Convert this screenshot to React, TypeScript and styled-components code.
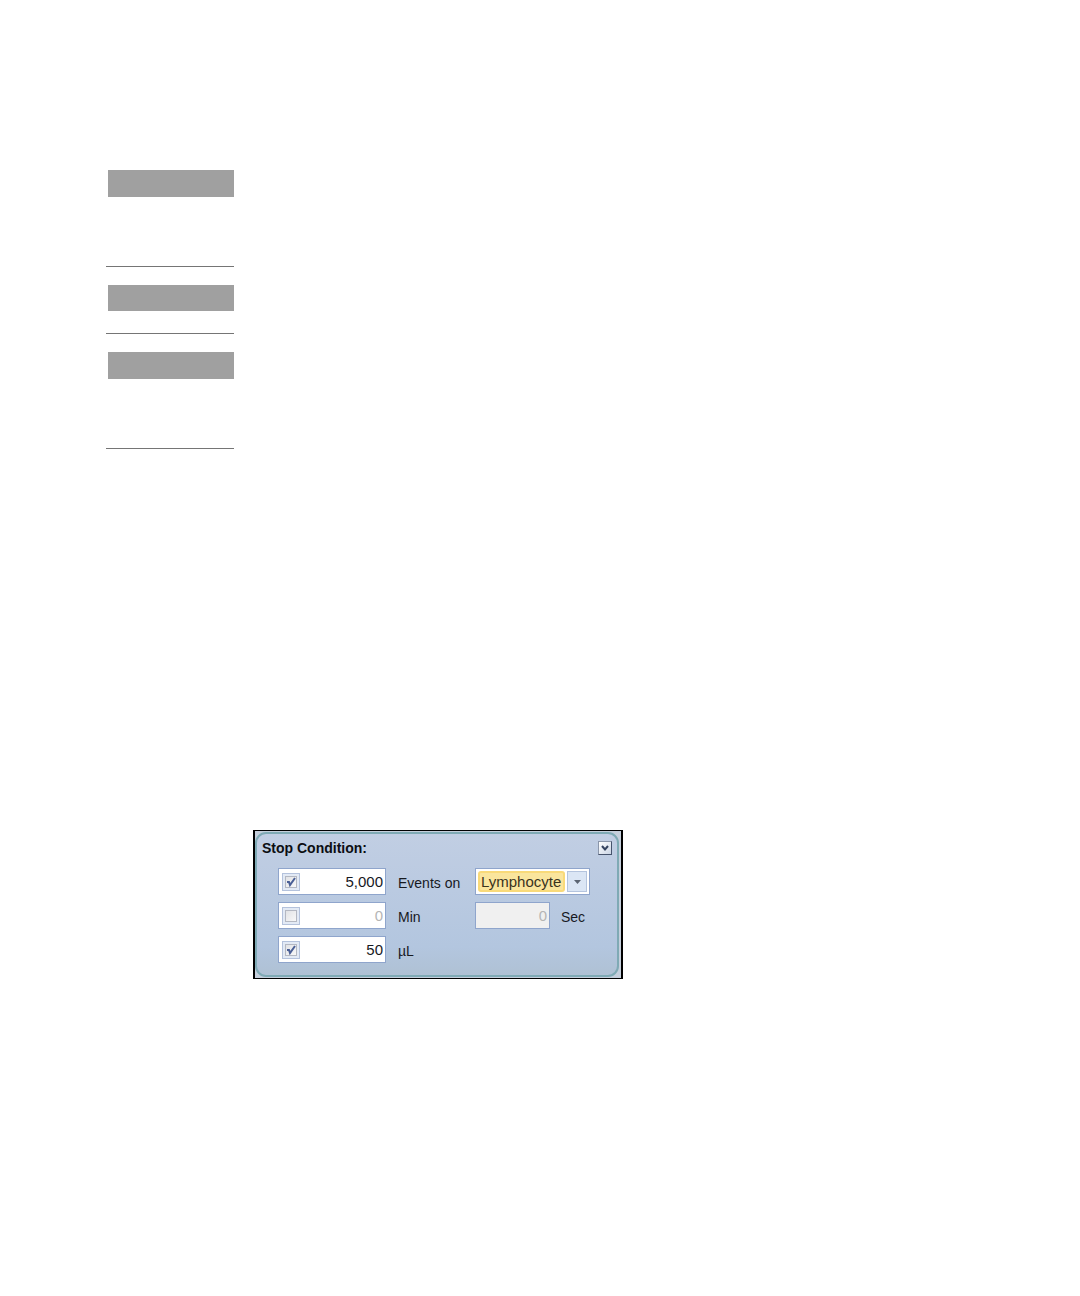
import React, { useState } from "react";
import styled, { createGlobalStyle } from "styled-components";

const GlobalStyle = createGlobalStyle`
  *, *::before, *::after { box-sizing: border-box; }
  body {
    margin: 0;
    background: #fff;
    color: #17191f;
    font-family: "Liberation Sans", Arial, sans-serif;
  }
`;

const Page = styled.main`
  display: flex;
  flex-direction: column;
  gap: 381px;
  min-height: 100vh;
  padding: 170px 106px 64px;
`;

const Outline = styled.aside`
  display: flex;
  flex-direction: column;
  gap: 18px;
  width: 128px;
`;

const OutlineBlock = styled.div<{ $space: number }>`
  padding: 0 0 ${(p) => p.$space}px 2px;
  border-bottom: 1px solid #757575;
`;

const Heading = styled.div<{ $height: number }>`
  height: ${(p) => p.$height}px;
  background: #a0a0a0;
`;

const Frame = styled.section`
  width: 100%;
  max-width: 370px;
  margin-left: 147px;
  padding: 1px 2px 1px 0;
  border: solid #000;
  border-width: 1px 2px;
  background: #c5cfdc;
`;

const Panel = styled.form`
  padding: 4px 5px 12px 5px;
  border: 2px solid #7faab5;
  border-radius: 11px;
  background: linear-gradient(#c1cee3, #b3c6df 80%, #afc1d4);
`;

const PanelHeader = styled.header`
  display: flex;
  align-items: center;
  justify-content: space-between;
  height: 20px;
`;

const Title = styled.h2`
  margin: 0;
  color: #0c0d12;
  font-size: 14px;
  line-height: 20px;
`;

const CollapseButton = styled.button`
  display: grid;
  place-items: center;
  width: 14px;
  height: 14px;
  padding: 0;
  border: 1px solid #8b96aa;
  border-right-color: #46536c;
  border-bottom-color: #46536c;
  background: linear-gradient(135deg, #fff, #cbd5e5);
`;

const Fields = styled.div`
  display: grid;
  grid-template-columns: 108px 65px 1fr;
  grid-auto-rows: 27px;
  column-gap: 12px;
  row-gap: 7px;
  margin: 10px 0 0 16px;
`;

const Caption = styled.label`
  padding-top: 3px;
  font-size: 14px;
  line-height: 24px;
  white-space: nowrap;
`;

const Group = styled.div`
  display: flex;
  gap: 11px;
`;

const CheckedField = styled.div`
  display: flex;
  align-items: center;
  padding: 0 2px 0 3px;
  border: 1px solid #8fa5cc;
  background: #fff;
`;

const CheckFrame = styled.span`
  display: grid;
  flex: none;
  place-items: center;
  width: 18px;
  height: 18px;
  border: 1px solid #b4c2dc;
  background: #e3eaf5;

  > * { grid-area: 1 / 1; }
`;

const CheckInput = styled.input`
  appearance: none;
  width: 12px;
  height: 12px;
  margin: 0;
  border: 1px solid #b4b8c2;
  background: linear-gradient(135deg, #e2e3e6, #f8f8f8);
`;

const CheckMark = styled.svg`
  pointer-events: none;
`;

const ValueInput = styled.input<{ $muted?: boolean }>`
  flex: 1;
  width: 0;
  min-width: 0;
  height: 25px;
  padding: 0;
  border: 0;
  outline: 0;
  background: transparent;
  color: ${(p) => (p.$muted ? "#b5b5b5" : "#17191f")};
  font: 15px "Liberation Sans", Arial, sans-serif;
  text-align: right;
`;

const PlainField = styled.div`
  display: flex;
  width: 75px;
  padding: 0 2px;
  border: 1px solid #8fa5cc;
  background: #f0f0f0;
`;

const Combo = styled.div`
  display: flex;
  align-items: center;
  width: 115px;
  height: 27px;
  padding: 2px;
  border: 1px solid #8fa5cc;
  background: #fff;
`;

const ComboSelect = styled.select`
  appearance: none;
  width: 87px;
  height: 21px;
  padding: 0 0 0 1px;
  border: 2px solid #f9da79;
  border-radius: 3px;
  outline: 0;
  background: #fae59d;
  color: #3a331d;
  font: 15px "Liberation Sans", Arial, sans-serif;
`;

const ComboArrow = styled.span`
  display: grid;
  place-items: center;
  width: 20px;
  height: 21px;
  margin-left: auto;
  border: 1px solid #b4c4de;
  background: #dbe6f5;
  pointer-events: none;
`;

type LimitProps = { id: string; name: string; value: string; on: boolean };

function LimitField({ id, name, value, on }: LimitProps) {
  const [checked, setChecked] = useState(on);
  const [text, setText] = useState(value);
  return (
    <CheckedField>
      <CheckFrame>
        <CheckInput
          type="checkbox"
          aria-label={name}
          checked={checked}
          onChange={(e) => setChecked(e.target.checked)}
        />
        {checked && (
          <CheckMark width="12" height="12" viewBox="0 0 12 12" fill="none">
            <path d="M2 6h2l1 3L10 2" stroke="#4a5f96" strokeWidth="2" />
          </CheckMark>
        )}
      </CheckFrame>
      <ValueInput
        id={id}
        $muted={!checked}
        disabled={!checked}
        value={text}
        onChange={(e) => setText(e.target.value)}
      />
    </CheckedField>
  );
}

const outline = [
  { height: 27, space: 69 },
  { height: 26, space: 22 },
  { height: 27, space: 69 },
];

export default function App() {
  return (
    <>
      <GlobalStyle />
      <Page>
        <Outline>
          {outline.map((block, i) => (
            <OutlineBlock key={i} $space={block.space}>
              <Heading $height={block.height} />
            </OutlineBlock>
          ))}
        </Outline>
        <Frame>
          <Panel>
            <PanelHeader>
              <Title>Stop Condition:</Title>
              <CollapseButton type="button" aria-label="Collapse">
                <svg width="8" height="8" viewBox="0 0 8 8" fill="none">
                  <path d="M1 2 4 5.5 7 2" stroke="#35435f" strokeWidth="2" />
                </svg>
              </CollapseButton>
            </PanelHeader>
            <Fields>
              <LimitField id="events" name="Limit events" value="5,000" on />
              <Caption htmlFor="events">Events on</Caption>
              <Combo>
                <ComboSelect aria-label="Population" defaultValue="Lymphocyte">
                  <option>Lymphocyte</option>
                </ComboSelect>
                <ComboArrow>
                  <svg width="7" height="4" viewBox="0 0 7 4">
                    <path d="M0 0h7L3.5 4z" fill="#5c6573" />
                  </svg>
                </ComboArrow>
              </Combo>

              <LimitField id="minutes" name="Limit time" value="0" on={false} />
              <Caption htmlFor="minutes">Min</Caption>
              <Group>
                <PlainField>
                  <ValueInput id="seconds" $muted disabled defaultValue="0" />
                </PlainField>
                <Caption htmlFor="seconds">Sec</Caption>
              </Group>

              <LimitField id="volume" name="Limit volume" value="50" on />
              <Caption htmlFor="volume">µL</Caption>
            </Fields>
          </Panel>
        </Frame>
      </Page>
    </>
  );
}
